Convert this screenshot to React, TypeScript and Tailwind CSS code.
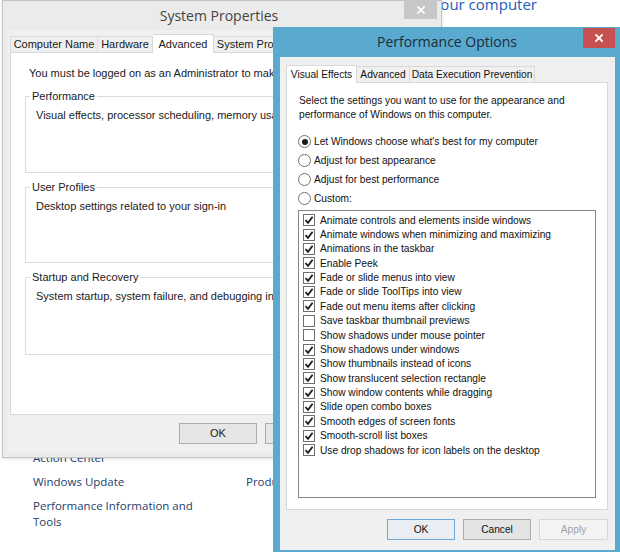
import React from 'react';

const effects: [string, boolean][] = [
  ['Animate controls and elements inside windows', true],
  ['Animate windows when minimizing and maximizing', true],
  ['Animations in the taskbar', true],
  ['Enable Peek', true],
  ['Fade or slide menus into view', true],
  ['Fade or slide ToolTips into view', true],
  ['Fade out menu items after clicking', true],
  ['Save taskbar thumbnail previews', false],
  ['Show shadows under mouse pointer', false],
  ['Show shadows under windows', true],
  ['Show thumbnails instead of icons', true],
  ['Show translucent selection rectangle', true],
  ['Show window contents while dragging', true],
  ['Slide open combo boxes', true],
  ['Smooth edges of screen fonts', true],
  ['Smooth-scroll list boxes', true],
  ['Use drop shadows for icon labels on the desktop', true],
];

const radios = [
  "Let Windows choose what's best for my computer",
  'Adjust for best appearance',
  'Adjust for best performance',
  'Custom:',
];

const CloseGlyph = ({ size = 8 }: { size?: number }) => (
  <svg width={size} height={size} viewBox="0 0 8 8">
    <path d="M1 1 L7 7 M7 1 L1 7" stroke="#fff" strokeWidth="1.8" strokeLinecap="square" />
  </svg>
);

const CheckBox = ({ on }: { on: boolean }) => (
  <span className="w-[12px] h-[12px] border border-[#707070] bg-white flex items-center justify-center shrink-0">
    {on && (
      <svg width="10" height="10" viewBox="0 0 10 10">
        <path d="M1.5 5.2 L4 7.8 L8.6 1.8" fill="none" stroke="#1c1c1c" strokeWidth="1.8" />
      </svg>
    )}
  </span>
);

const Radio = ({ on }: { on: boolean }) => (
  <span className="w-[13px] h-[13px] rounded-full border border-[#707070] bg-white flex items-center justify-center shrink-0">
    {on && <span className="w-[6px] h-[6px] rounded-full bg-[#1c1c1c]" />}
  </span>
);

const Group = ({ label, text, h }: { label: string; text: string; h: string }) => (
  <fieldset className={`border border-[#dcdcdc] mx-[14px] ${h}`}>
    <legend className="ml-[4px] px-[2px] text-[11px] leading-[13px] text-[#1a1a1a]">{label}</legend>
    <p className="pl-[10px] pt-[6px] leading-[13px] whitespace-nowrap">{text}</p>
  </fieldset>
);

function SystemProperties() {
  return (
    <div className="absolute left-[2px] top-0 w-[440px] h-[458px] bg-[#ebebeb] border border-[#c4c4c4] shadow-[0_1px_3px_rgba(0,0,0,0.12)] flex flex-col font-['Liberation_Sans',Arial,sans-serif] text-[11px] text-[#1a1a1a]">
      <div className="relative h-[29px] flex items-center justify-center">
        <span className="font-['Open_Sans',sans-serif] text-[14px] text-[#444] pr-[6px]">System Properties</span>
        <span className="absolute right-[4px] top-[-1px] w-[33px] h-[19px] bg-[#c7c7c7] flex items-center justify-center">
          <CloseGlyph />
        </span>
      </div>
      <div className="flex-1 mx-[5px] mb-[5px] bg-[#f0f0f0] pt-[3px] px-[2px] flex flex-col">
        <div className="flex items-end h-[19px]">
          <div className="w-[88px] h-[16px] border border-b-0 border-[#d9d9d9] flex items-center justify-center">Computer Name</div>
          <div className="w-[55px] h-[16px] border border-b-0 border-l-0 border-[#d9d9d9] flex items-center justify-center">Hardware</div>
          <div className="w-[61px] h-[19px] border border-b-0 border-l-0 border-[#d9d9d9] bg-white flex items-center justify-center -mb-px relative">Advanced</div>
          <div className="w-[96px] h-[16px] border border-b-0 border-l-0 border-[#d9d9d9] flex items-center justify-center">System Protection</div>
          <div className="w-[60px] h-[16px] border border-b-0 border-l-0 border-[#d9d9d9] flex items-center justify-center">Remote</div>
        </div>
        <div className="h-[363px] border border-[#d9d9d9] bg-white flex flex-col">
          <p className="pl-[18px] pt-[14px] leading-[13px] whitespace-nowrap">You must be logged on as an Administrator to make most of these changes.</p>
          <div className="mt-[10px] flex flex-col gap-[8px]">
            <Group label="Performance" text="Visual effects, processor scheduling, memory usage, and virtual memory" h="h-[83px]" />
            <Group label="User Profiles" text="Desktop settings related to your sign-in" h="h-[82px]" />
            <Group label="Startup and Recovery" text="System startup, system failure, and debugging information" h="h-[84px]" />
          </div>
        </div>
        <div className="flex justify-end gap-[8px] pt-[8px] pr-[5px]">
          <button className="w-[78px] h-[21px] border border-[#adadad] bg-[#e6e6e6]">OK</button>
          <button className="w-[78px] h-[21px] border border-[#adadad] bg-[#e6e6e6]">Cancel</button>
          <button className="w-[78px] h-[21px] border border-[#adadad] bg-[#e6e6e6]">Apply</button>
        </div>
      </div>
    </div>
  );
}

function PerformanceOptions() {
  return (
    <div className="absolute left-[273px] top-[27px] w-[349px] h-[530px] bg-[#5aa9cf] flex flex-col font-['Liberation_Sans',Arial,sans-serif] text-[10.2px] text-[#111]">
      <div className="relative h-[30px] flex items-center justify-center">
        <span className="font-['Open_Sans',sans-serif] text-[14px] text-[#1d2c38] pr-[1px] pb-[1px]">Performance Options</span>
        <span className="absolute right-[7px] top-[1px] w-[32px] h-[20px] bg-[#c75050] flex items-center justify-center">
          <CloseGlyph />
        </span>
      </div>
      <div className="flex-1 mx-[7px] mb-[7px] bg-[#f0f0f0] pt-[7px] pl-[6px] pr-[7px] flex flex-col">
        <div className="flex items-end h-[18px]">
          <div className="w-[71px] h-[18px] border border-b-0 border-[#d9d9d9] bg-white flex items-center justify-center -mb-px relative">Visual Effects</div>
          <div className="w-[53px] h-[16px] border border-b-0 border-l-0 border-[#d9d9d9] flex items-center justify-center">Advanced</div>
          <div className="w-[125px] h-[16px] border border-b-0 border-l-0 border-[#d9d9d9] flex items-center justify-center">Data Execution Prevention</div>
        </div>
        <div className="h-[428px] border border-[#d9d9d9] bg-white pt-[11px] pl-[11px] pr-[11px]">
          <p className="pl-[1px] leading-[13.5px]">
            Select the settings you want to use for the appearance and
            <br />
            performance of Windows on this computer.
          </p>
          <div className="mt-[11px] flex flex-col">
            {radios.map((r, i) => (
              <div key={r} className="h-[19px] flex items-center gap-[3px]">
                <Radio on={i === 0} />
                <span>{r}</span>
              </div>
            ))}
          </div>
          <div className="mt-[2px] h-[288px] border border-[#828790] bg-white pt-[2px] pl-[4px]">
            {effects.map(([label, on]) => (
              <div key={label} className="h-[14.375px] flex items-center gap-[5px]">
                <CheckBox on={on} />
                <span className="whitespace-nowrap">{label}</span>
              </div>
            ))}
          </div>
        </div>
        <div className="flex justify-end gap-[8px] pt-[9px]">
          <button className="w-[68px] h-[21px] border border-[#6fa9dc] bg-[#e8eef4]">OK</button>
          <button className="w-[68px] h-[21px] border border-[#acacac] bg-[#e4e4e4]">Cancel</button>
          <button className="w-[69px] h-[21px] border border-[#d6d6d6] bg-[#f3f3f3] text-[#a2a2a2]">Apply</button>
        </div>
      </div>
    </div>
  );
}

export default function App() {
  return (
    <div className="relative w-[620px] h-[552px] overflow-hidden bg-white">
      {/* control panel page behind the dialogs */}
      <div className="w-[537px] -mt-[6px] text-right font-['Open_Sans',sans-serif] text-[15px] leading-[20px] text-[#1e5bb8]">
        View basic information about your computer
      </div>
      <div className="pt-[436px] pl-[33px] flex gap-[43px] font-['Open_Sans',sans-serif] text-[11.5px] text-[#25406c]">
        <div className="w-[170px] flex flex-col gap-[8px] leading-[16px]">
          <span>Action Center</span>
          <span>Windows Update</span>
          <span className="w-[160px]">Performance Information and Tools</span>
        </div>
        <div className="pt-[24px] leading-[16px] whitespace-nowrap">Product ID: Not Available</div>
      </div>
      <SystemProperties />
      <PerformanceOptions />
    </div>
  );
}
